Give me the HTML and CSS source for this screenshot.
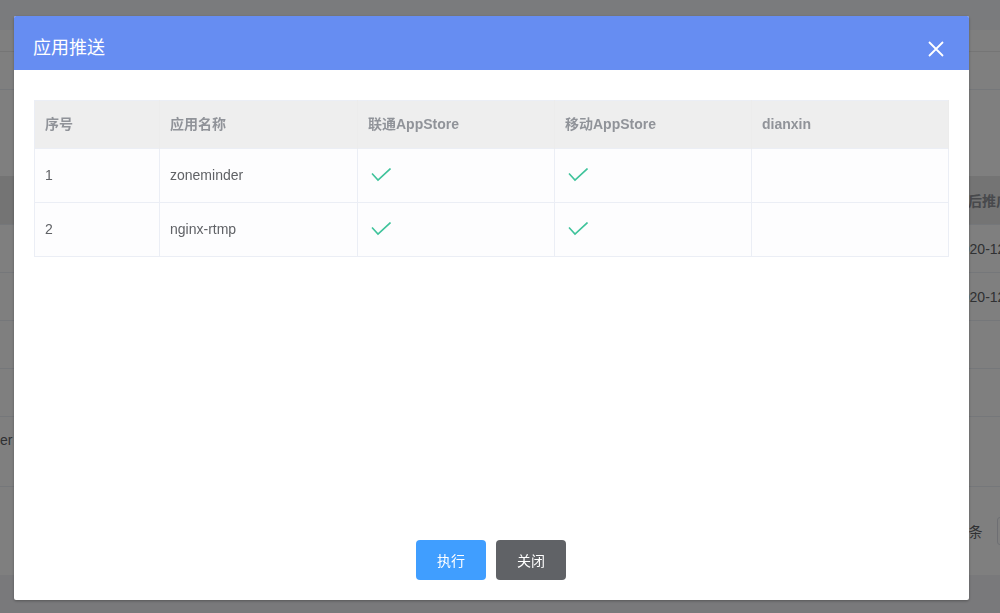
FILE: index.html
```html
<!DOCTYPE html>
<html lang="zh-CN">
<head>
<meta charset="utf-8">
<title>应用推送</title>
<link rel="stylesheet" href="styles.css">
</head>
<body>
<div class="page">
  <div class="topbar"></div>
  <div class="tabs"></div>
  <div class="toolbar"></div>
  <div class="spacer"></div>
  <div class="bg-table">
    <div class="bg-row bg-head"><span class="bg-cell-last">最后推广时间</span></div>
    <div class="bg-row"><span class="bg-cell-last">2020-12-01</span></div>
    <div class="bg-row"><span class="bg-cell-last">2020-12-01</span></div>
    <div class="bg-row"></div>
    <div class="bg-row"></div>
    <div class="bg-row bg-tall"><span class="bg-cell-first">er</span></div>
  </div>
  <div class="bg-pager"><span class="bg-total">共 2 条</span><span class="bg-select"></span></div>
  <div class="bg-footer"></div>
</div>

<div class="mask">
  <div class="dialog">
    <div class="dialog-header">
      <span class="dialog-title">应用推送</span>
      <svg class="dialog-close" width="16" height="16" viewBox="0 0 16 16"><path d="M1 1L15 15M15 1L1 15" stroke="#fff" stroke-width="1.8" fill="none"/></svg>
    </div>
    <div class="dialog-body">
      <table class="push-table">
        <colgroup>
          <col class="c1"><col class="c2"><col class="c3"><col class="c4"><col class="c5">
        </colgroup>
        <thead>
          <tr><th><div class="cell">序号</div></th><th><div class="cell">应用名称</div></th><th><div class="cell">联通AppStore</div></th><th><div class="cell">移动AppStore</div></th><th><div class="cell">dianxin</div></th></tr>
        </thead>
        <tbody>
          <tr>
            <td><div class="cell">1</div></td><td><div class="cell">zoneminder</div></td>
            <td><svg class="check" width="20" height="14" viewBox="0 0 20 14"><polyline points="1,5.5 7,12 19.5,0.5" fill="none" stroke="#3fc39b" stroke-width="1.6"/></svg></td>
            <td><svg class="check" width="20" height="14" viewBox="0 0 20 14"><polyline points="1,5.5 7,12 19.5,0.5" fill="none" stroke="#3fc39b" stroke-width="1.6"/></svg></td>
            <td></td>
          </tr>
          <tr>
            <td><div class="cell">2</div></td><td><div class="cell">nginx-rtmp</div></td>
            <td><svg class="check" width="20" height="14" viewBox="0 0 20 14"><polyline points="1,5.5 7,12 19.5,0.5" fill="none" stroke="#3fc39b" stroke-width="1.6"/></svg></td>
            <td><svg class="check" width="20" height="14" viewBox="0 0 20 14"><polyline points="1,5.5 7,12 19.5,0.5" fill="none" stroke="#3fc39b" stroke-width="1.6"/></svg></td>
            <td></td>
          </tr>
        </tbody>
      </table>
    </div>
    <div class="dialog-footer">
      <button class="btn btn-primary">执行</button>
      <button class="btn btn-dark">关闭</button>
    </div>
  </div>
</div>
</body>
</html>
```
FILE: styles.css
```css
* { box-sizing: border-box; }
html, body { margin: 0; padding: 0; }
body {
  width: 1000px;
  height: 613px;
  overflow: hidden;
  font-family: "Liberation Sans", "Noto Sans CJK SC", sans-serif;
  background: #ffffff;
  position: relative;
}

/* underlying page */
.page { display: flex; flex-direction: column; height: 613px; }
.topbar { height: 30px; background: #f4f6fa; }
.tabs { height: 22px; background: #ffffff; border-bottom: 1px solid #ebebeb; }
.toolbar { height: 38px; border-bottom: 1px solid #ebeef5; }
.spacer { height: 86px; }
.bg-table { display: flex; flex-direction: column; }
.bg-row {
  height: 48px;
  border-bottom: 1px solid #ebeef5;
  display: flex;
  align-items: center;
  font-size: 14px;
  color: #606266;
  position: relative;
}
.bg-head { background: #e8e8e8; height: 49px; font-weight: bold; color: #909399; }
.bg-tall { height: 70px; align-items: flex-start; padding-top: 15px; }
.bg-cell-last { margin-left: 954px; white-space: nowrap; }
.bg-cell-first { margin-left: 0; }
.bg-pager {
  height: 88px;
  display: flex;
  align-items: center;
  padding-left: 939px;
  gap: 14px;
  font-size: 14px;
  color: #606266;
  white-space: nowrap;
}
.bg-select { width: 40px; height: 28px; border: 1px solid #dcdfe6; border-radius: 3px; flex-shrink: 0; }
.bg-footer { flex: 1; background: #f2f2f6; }

/* overlay */
.mask {
  position: fixed;
  inset: 0;
  background: rgba(0, 0, 0, 0.5);
}
.dialog {
  position: absolute;
  left: 14px;
  top: 16px;
  width: 955px;
  height: 584px;
  background: #ffffff;
  border-radius: 2px;
  box-shadow: 0 1px 3px rgba(0, 0, 0, 0.3);
  display: flex;
  flex-direction: column;
  overflow: hidden;
}
.dialog-header {
  height: 54px;
  background: #668df2;
  display: flex;
  align-items: center;
  justify-content: space-between;
  padding: 10px 25px 0 19px;
  flex-shrink: 0;
}
.dialog-title {
  color: #ffffff;
  font-size: 18px;
  line-height: 24px;
}
.dialog-close { display: block; margin-top: 1px; }
.dialog-body {
  flex: 1;
  padding: 30px 21px 0 20px;
}
.push-table {
  width: 914px;
  border-collapse: collapse;
  table-layout: fixed;
  border: 1px solid #ebeef5;
  font-size: 14px;
}
.c1 { width: 125px; }
.c2 { width: 198px; }
.c3 { width: 197px; }
.c4 { width: 197px; }
.c5 { width: 197px; }
.cell { height: 20px; line-height: 20px; white-space: nowrap; }
.push-table th {
  height: 48px;
  background: #eeeeee;
  color: #909399;
  font-weight: bold;
  text-align: left;
  padding: 0 10px 1px 10px;
  border-right: 1px solid #ececec;
}
.push-table td {
  height: 54px;
  background: #fdfdfe;
  color: #606266;
  text-align: left;
  padding: 0 10px 2px 10px;
  border: 1px solid #ebeef5;
}
.check { display: block; margin-left: 3px; margin-top: 1px; }
.dialog-footer {
  display: flex;
  justify-content: center;
  gap: 10px;
  padding: 0 1px 20px 0;
}
.btn {
  width: 70px;
  height: 40px;
  border: none;
  border-radius: 4px;
  color: #ffffff;
  font-size: 14px;
  font-family: "Liberation Sans", "Noto Sans CJK SC", sans-serif;
  padding: 0;
}
.btn-primary { background: #409eff; }
.btn-dark { background: #606266; }
```
